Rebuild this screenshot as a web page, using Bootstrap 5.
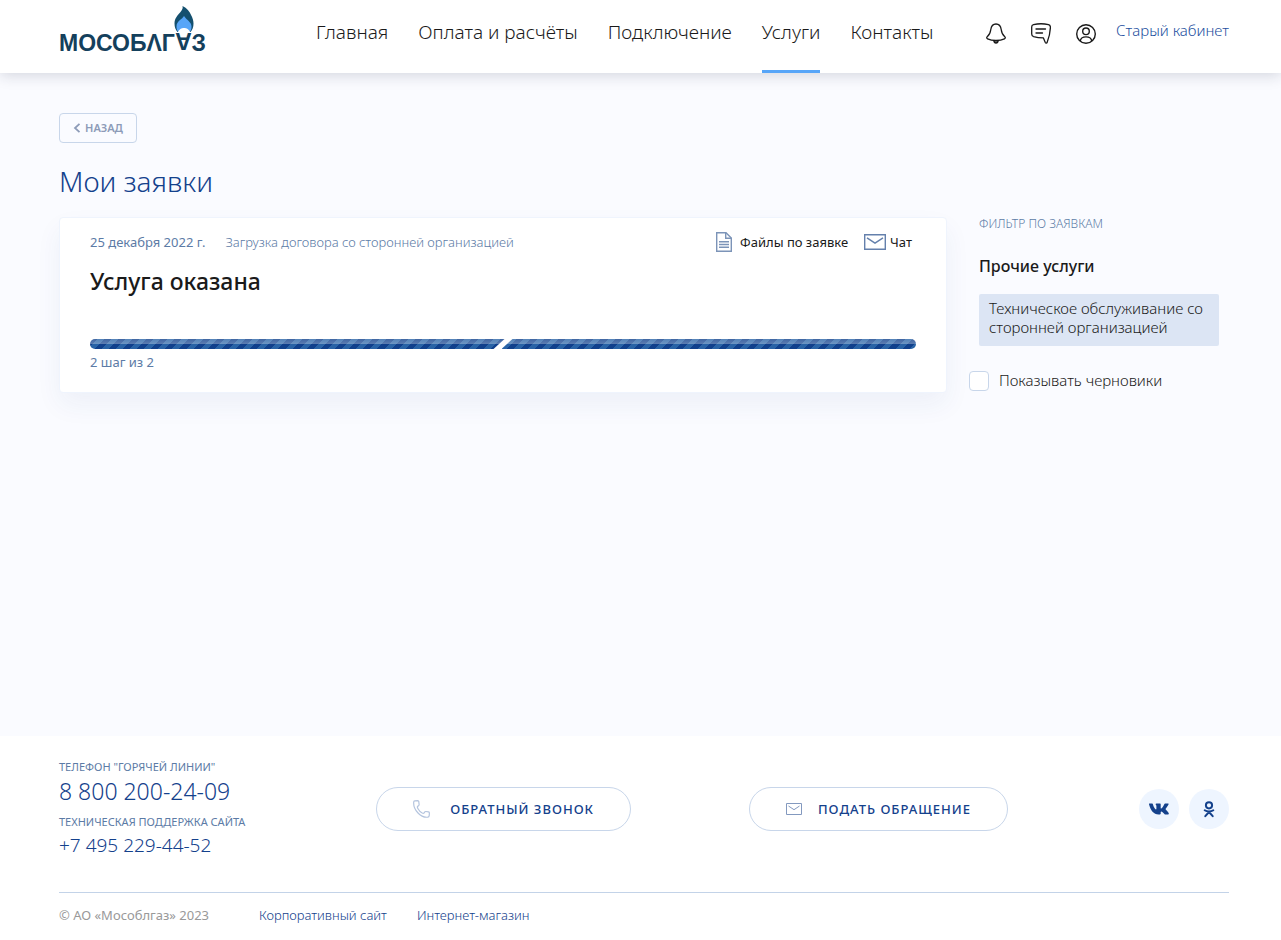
<!DOCTYPE html>
<html lang="ru">
<head>
<meta charset="utf-8">
<meta name="viewport" content="width=device-width, initial-scale=1">
<title>Мособлгаз — Мои заявки</title>
<link rel="stylesheet" href="https://cdn.jsdelivr.net/npm/bootstrap@5.3.0/dist/css/bootstrap.min.css">
<style>
  body { font-family: "Noto Sans", "Open Sans", sans-serif; font-size: 13px; line-height: 20px; color: #1a1a1a; background: #fafbff; }
  a { text-decoration: none; }
  svg { display: block; flex: none; }
  .page-x { padding-left: 59px; padding-right: 52px; }
  .light { font-weight: 300; }
  .muted-blue { color: #5c7ba6; }

  .site-header { background: #fff; min-height: 73px; box-shadow: 0 2px 14px rgba(30, 35, 60, .18); }
  .logo { margin-top: 30px; width: 257px; height: 26px; color: #14405c; font: 700 23px/26px "Liberation Sans", sans-serif; }
  .logo:hover { color: #14405c; }
  .logo-turned { display: inline-block; transform: rotate(180deg); transform-origin: 50% 12px; }
  .flame { left: 115px; top: -24px; }
  .main-nav { gap: 30px; font-size: 19px; line-height: 24px; }
  .main-nav a { color: #1a1a1a; padding: 20px 0 26px; border-bottom: 3px solid transparent; }
  .main-nav a.active { border-color: #57a5f8; }
  .tools { gap: 25px; padding-top: 23px; }
  .tools a { color: #1a1a1a; }
  .tools .old-account { color: #1d4fa0; font-size: 15px; line-height: 14px; margin-left: -5px; }

  .btn-back { height: 30px; width: 78px; border: 1px solid #c8d6ea; border-radius: 4px; color: #8d9bb8; font-size: 11px; font-weight: 600; line-height: 16px; background: transparent; }
  .page-title { font-size: 28px; font-weight: 300; line-height: 36px; color: #14418c; margin: 20px 0 18px; }
  .request { padding: 14px 30px 20px; border: 1px solid #eff4fd; border-radius: 4px; box-shadow: 0 12px 26px rgba(40, 70, 140, .06); }
  .request h2 { font-size: 23px; font-weight: 500; line-height: 30px; margin: 14px 0 43px; }
  .request .actions a { color: #1a1a1a; }
  .steps { height: 10px; margin-bottom: 3px; }
  .step { flex: 1 1 0; background: linear-gradient(rgba(255,255,255,.2), rgba(255,255,255,.32)) 0 0 / 100% 5px no-repeat, repeating-linear-gradient(135deg, #10408c 0 5px, #2963a6 5px 10px); }
  .step-first { border-radius: 5px 0 0 5px; clip-path: polygon(0 0, 100% 0, calc(100% - 11px) 100%, 0 100%); }
  .step-last { margin-left: -3px; border-radius: 0 5px 5px 0; clip-path: polygon(11px 0, 100% 0, 100% 100%, 0 100%); }

  .filters { width: 250px; margin-left: 32px; }
  .filters .caption-line { font-size: 12px; font-weight: 300; line-height: 14px; }
  .filters h3 { font-size: 16px; font-weight: 500; line-height: 24px; margin: 23px 0 16px; }
  .filter-item { width: 240px; padding: 5px 10px 9px; background: #dce5f4; border-radius: 2px; color: #1a1a1a; font-size: 15px; line-height: 19px; }
  .drafts { gap: 10px; margin: 25px 0 0 -10px; font-size: 15px; line-height: 18px; }
  .drafts .form-check-input { width: 20px; height: 20px; border: 1px solid #c8d6ea; border-radius: 4px; }

  .site-footer { background: #fff; }
  .footer-main { display: grid; grid-template-columns: 317fr 373fr 390fr 90px; padding: 23px 0 32px; border-bottom: 1px solid #c3d3e8; }
  .phone-label { font-size: 11px; line-height: 16px; color: #5c7ba6; }
  .phone { color: #14418c; font-weight: 300; }
  .phone-lg { font-size: 23px; line-height: 32px; margin-bottom: 7px; }
  .phone-md { font-size: 19px; line-height: 30px; }
  .btn-pill { height: 44px; border: 1px solid #c8d6ea; border-radius: 22px; background: #fff; color: #14418c; font-size: 13px; font-weight: 500; letter-spacing: 1px; padding: 0 36px; }
  .pill-call { width: 255px; }
  .pill-mail { width: 259px; }
  .social-row { height: 44px; }
  .social { width: 40px; height: 40px; border-radius: 50%; background: #eef5ff; color: #14418c; }
  .legal { gap: 30px; padding: 12px 0 15px; color: #999; }
  .legal a { color: #14418c; font-weight: 300; }
</style>
</head>
<body class="d-flex flex-column min-vh-100">

<header class="site-header page-x d-flex justify-content-between position-relative">
  <div class="d-flex">
    <a class="logo position-relative text-nowrap" href="#">МОСОБΛГ<span class="logo-turned">А</span>З
      <svg class="flame position-absolute" width="20" height="27" viewBox="0 0 20 27" aria-hidden="true">
        <path fill="#14506f" d="M8.500 0C9 2 8.600 3.600 6.500 6C3.500 9.500.5 12.500.5 17.500C.5 21 1.500 24 3.500 26H16.500C18.500 24 19.500 21 19.500 17.500C19.500 14 18.500 12 17.300 9.500C15.500 5.500 13 2 8.500 0Z"/>
        <path fill="#57a5f8" d="M10 10C8.500 13 2.500 15 2.500 20.500C2.500 23 3.200 24.500 4.200 26H15.800C17 24.500 17.500 23 17.500 20.500C17.500 16 13 14.500 10 10Z"/>
        <path fill="#fff" d="M3.500 27C5 23 7.500 22 10 22S15 23 16.500 27Z"/>
      </svg>
    </a>
    <nav class="main-nav light d-flex text-nowrap">
      <a href="#">Главная</a>
      <a href="#">Оплата и расчёты</a>
      <a href="#">Подключение</a>
      <a href="#" class="active" aria-current="page">Услуги</a>
      <a href="#">Контакты</a>
    </nav>
  </div>
  <div class="tools d-flex align-items-start text-nowrap">
    <a href="#" aria-label="Уведомления">
      <svg width="20" height="21" viewBox="0 0 20 21" fill="none" stroke="currentColor" stroke-width="1.3"><path d="M10 1C6.500 1 5.200 3.500 4.800 6.500C4.400 10 4 11.500 1.200 13.800C.4 14.500.6 15.400 1.600 15.900C6 18 14 18 18.400 15.900C19.400 15.400 19.600 14.500 18.800 13.800C16 11.500 15.600 10 15.200 6.500C14.800 3.500 13.500 1 10 1Z"/><path d="M7.800 17.600C8.200 20.800 11.800 20.800 12.200 17.600Z" fill="#777"/></svg>
    </a>
    <a href="#" aria-label="Сообщения">
      <svg width="20" height="21" viewBox="0 0 20 21" fill="none" stroke="currentColor" stroke-width="1.3" stroke-linejoin="round" stroke-linecap="round"><path d="M2.500 1.600C7 .6 13 .6 17.500 1.600C19 2 19.500 3 19.400 4.500C19.200 9 18 14.500 16.200 19.200C15.800 20.400 14.700 20.400 14.200 19.300L12.300 14.800C9 14.800 5.500 14.400 2.600 13.600C1.300 13.200.7 12.300.7 11V4C.7 2.700 1.300 1.900 2.500 1.600Z"/><path d="M5 6H14.500M5 10H11.500"/></svg>
    </a>
    <a href="#" aria-label="Профиль">
      <svg width="20" height="21" viewBox="0 0 20 21" fill="none" stroke="currentColor" stroke-width="1.4"><circle cx="10" cy="11" r="9.300"/><circle cx="10" cy="8.300" r="3.300"/><path d="M4.300 18C4.600 15.300 6.500 13.900 10 13.900S15.400 15.300 15.700 18"/></svg>
    </a>
    <a href="#" class="old-account light">Старый кабинет</a>
  </div>
</header>

<main class="page-x flex-grow-1 pt-4">
  <button type="button" class="btn-back d-flex align-items-center justify-content-center gap-1 mt-3 p-0">
    <svg width="8" height="10" viewBox="0 0 8 10" fill="none" stroke="currentColor" stroke-width="1.8"><path d="M6.500.8L2 5L6.500 9.200"/></svg>
    НАЗАД
  </button>
  <h1 class="page-title">Мои заявки</h1>
  <div class="d-flex align-items-start">
    <article class="request bg-white flex-grow-1">
      <div class="d-flex justify-content-between">
        <div class="muted-blue d-flex"><time datetime="2022-12-25" class="me-3 pe-1">25 декабря 2022 г.</time><span class="light">Загрузка договора со сторонней организацией</span></div>
        <div class="actions d-flex gap-3 pe-1">
          <a href="#" class="d-flex align-items-center gap-2">
            <svg width="16" height="20" viewBox="0 0 16 20" fill="none" stroke="#7c94b8" stroke-width="1.4"><path d="M.7.7H10L15.300 6V19.300H.7Z"/><path d="M9.700.7V6.300H15.300M3 9.700H13M3 12.500H13M3 15.300H13"/></svg>
            Файлы по заявке</a>
          <a href="#" class="d-flex align-items-center">
            <svg class="me-1" width="22" height="16" viewBox="0 0 22 16" fill="none" stroke="#6480ac" stroke-width="1.4"><path d="M.7.7H21.300V15.300H.7Z"/><path d="M3 3.800L11 9.200L19 3.800"/></svg>
            Чат</a>
        </div>
      </div>
      <h2>Услуга оказана</h2>
      <div class="steps d-flex" role="progressbar" aria-label="Шаги заявки" aria-valuemin="0" aria-valuemax="2" aria-valuenow="2">
        <div class="step step-first"></div>
        <div class="step step-last"></div>
      </div>
      <div class="muted-blue">2 шаг из 2</div>
    </article>
    <aside class="filters flex-shrink-0">
      <div class="caption-line muted-blue">ФИЛЬТР ПО ЗАЯВКАМ</div>
      <h3>Прочие услуги</h3>
      <a href="#" class="filter-item light d-block">Техническое обслуживание со сторонней организацией</a>
      <div class="drafts light d-flex">
        <input class="form-check-input m-0" type="checkbox" id="drafts">
        <label for="drafts">Показывать черновики</label>
      </div>
    </aside>
  </div>
</main>

<footer class="site-footer page-x">
  <div class="footer-main">
    <div class="text-nowrap">
      <div class="phone-label">ТЕЛЕФОН "ГОРЯЧЕЙ ЛИНИИ"</div>
      <a class="phone phone-lg d-block" href="tel:88002002409">8 800 200-24-09</a>
      <div class="phone-label">ТЕХНИЧЕСКАЯ ПОДДЕРЖКА САЙТА</div>
      <a class="phone phone-md d-block" href="tel:+74952294452">+7 495 229-44-52</a>
    </div>
    <div class="pt-4">
      <button type="button" class="btn-pill pill-call d-flex align-items-center justify-content-between mt-1">
        <svg width="17" height="18" viewBox="0 0 17 18" fill="none" stroke="#b4c4de" stroke-width="1.2" stroke-linejoin="round"><path d="M1.800.9L4.700.7C5.300.7 5.700 1.100 5.800 1.700L6.100 4.500C6.200 5.300 5.800 5.700 5 6.100C4 6.600 4.300 7.500 5 8.800C6 10.700 7.400 12.100 9.200 13C10.300 13.500 11 13.400 11.400 12.500C11.700 11.800 12.200 11.400 13 11.500L15.500 11.800C16.100 11.900 16.400 12.300 16.400 12.900L16.200 15.600C16.100 16.500 15.600 17 14.700 17.200C7.500 18 .2 9.500.7 2.300C.7 1.500 1.100 1 1.800.9Z"/></svg>
        ОБРАТНЫЙ ЗВОНОК
      </button>
    </div>
    <div class="pt-4">
      <button type="button" class="btn-pill pill-mail d-flex align-items-center justify-content-between mt-1">
        <svg width="16" height="12" viewBox="0 0 16 12" fill="none" stroke="#8399bf" stroke-width="1"><path d="M.5.500H15.500V11.500H.500Z"/><path d="M2.500 3L8 6.700L13.500 3"/></svg>
        ПОДАТЬ ОБРАЩЕНИЕ
      </button>
    </div>
    <div class="pt-4">
      <div class="social-row d-flex justify-content-between align-items-center mt-1">
        <a href="#" class="social d-flex align-items-center justify-content-center" aria-label="ВКонтакте">
          <svg width="20" height="12" viewBox="0 0 20 12" fill="currentColor"><path d="M9.600 11.500C4.500 11.500 1.700 7.500 0 1.300C-.1.900.1.600.5.600H3.200C3.600.6 3.800.8 3.900 1.200C4.600 4 6 6.300 7 6.500C7.300 6.500 7.400 6.200 7.400 5.600V3C7.300 1.800 6.600 1.700 6.600 1.200C6.600.9 6.900.5 7.500.5H11C11.500.5 11.700.8 11.700 1.300V5C11.700 5.400 11.900 5.600 12.100 5.600C12.700 5.500 14.400 3.200 15.300 1.200C15.500.8 15.700.6 16.100.6H18.900C19.500.6 19.700.9 19.500 1.400C18.900 3 16.500 5.500 16.500 6C16.500 6.600 19.300 8.700 19.800 10.500C20 11.100 19.700 11.500 19 11.500H16.300C15.400 11.500 13.500 8.400 12.400 8.400C12 8.400 11.700 8.700 11.700 9.300V10.500C11.700 11.200 11.400 11.500 9.600 11.500Z"/></svg>
        </a>
        <a href="#" class="social d-flex align-items-center justify-content-center" aria-label="Одноклассники">
          <svg width="12" height="17" viewBox="0 0 12 17" fill="none" stroke="currentColor" stroke-width="2" stroke-linecap="round"><circle cx="6" cy="4.300" r="3.100"/><path d="M1.700 9.300C4 11 8 11 10.300 9.300M6 11L2.300 15.200M6 11L9.700 15.200"/></svg>
        </a>
      </div>
    </div>
  </div>
  <div class="legal d-flex">
    <span class="me-3 pe-1">© АО «Мособлгаз» 2023</span>
    <a href="#">Корпоративный сайт</a>
    <a href="#">Интернет-магазин</a>
  </div>
</footer>

<script src="https://cdn.jsdelivr.net/npm/bootstrap@5.3.0/dist/js/bootstrap.bundle.min.js"></script>
</body>
</html>
